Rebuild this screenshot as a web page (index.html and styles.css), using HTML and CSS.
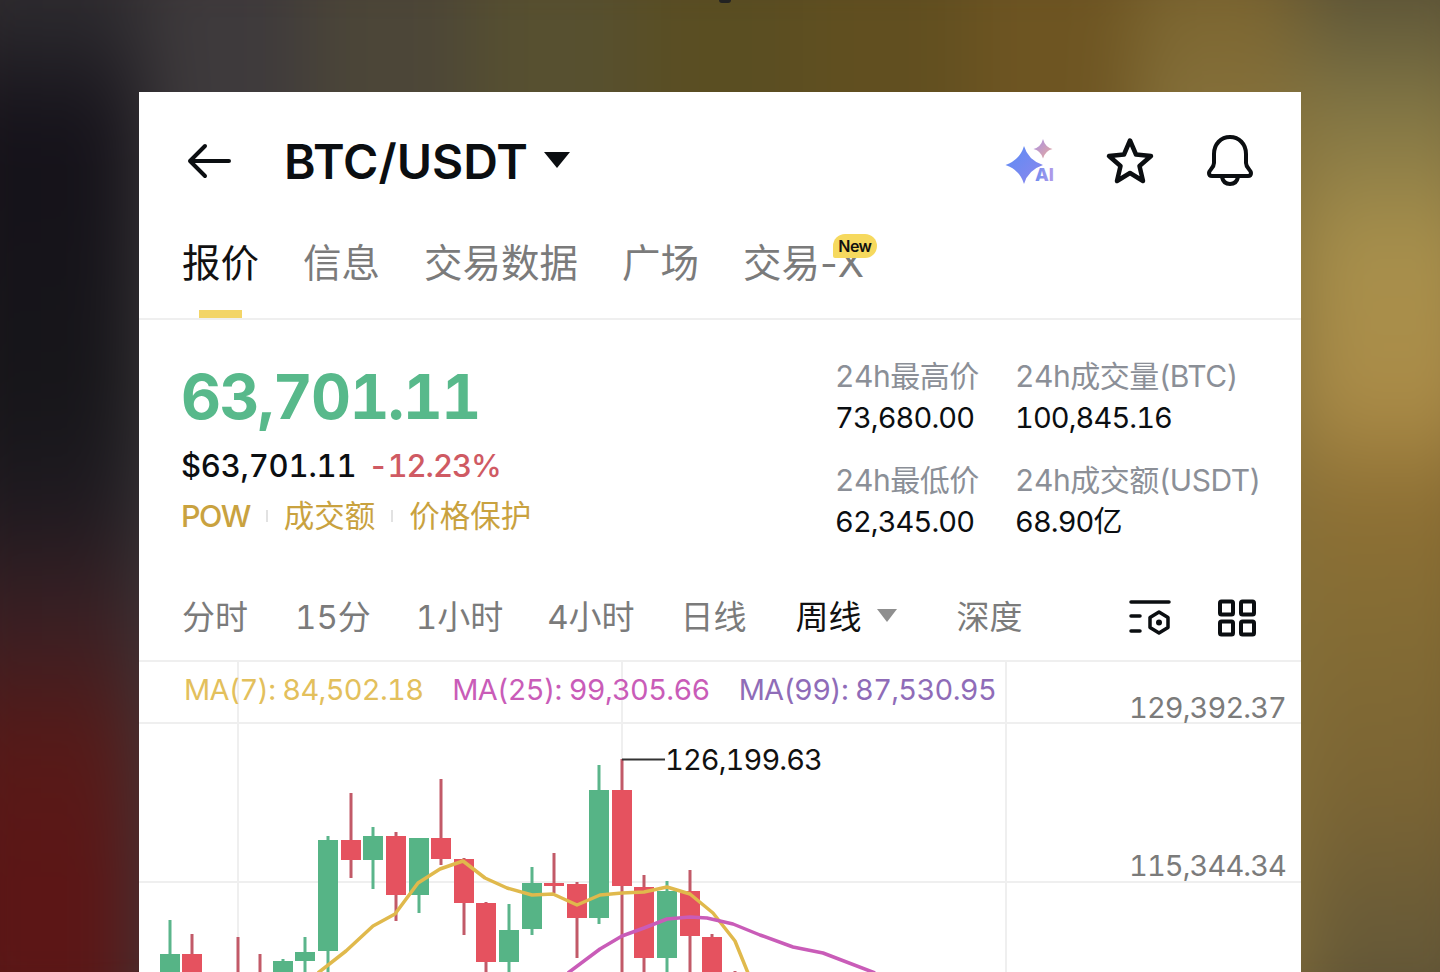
FILE: index.html
```html
<!DOCTYPE html>
<html>

<head>
	<meta charset="utf-8">
	<title>BTC/USDT</title>
	<link rel="stylesheet" href="styles.css">
</head>

<body>
	<div class="backdrop">
		<div class="backdrop-inner">
			<div class="bg-col bg-left"></div>
			<div class="bg-col bg-m1"></div>
			<div class="bg-col bg-m2"></div>
			<div class="bg-col bg-m3"></div>
			<div class="bg-col bg-m4"></div>
			<div class="bg-col bg-m5"></div>
			<div class="bg-col bg-m6"></div>
			<div class="bg-col bg-m7"></div>
			<div class="bg-col bg-right"></div>
		</div>
	</div>
	<div class="notch"></div>
	<div class="card">
		<div class="topbar">
			<svg class="back" width="46" height="38" viewBox="0 0 46 38"><path d="M42 19H3M18 4 3 19l15 15" fill="none" stroke="#0b0e11" stroke-width="4" stroke-linecap="round" stroke-linejoin="round"/></svg>
			<span class="pair">BTC/USDT</span>
			<span class="pair-caret"></span>
			<div class="topicons">
				<svg width="52" height="50" viewBox="0 0 52 50">
					<defs>
						<linearGradient id="aigrad" x1="0" y1="0" x2="1" y2="1"><stop offset="0" stop-color="#5b8cf5"/><stop offset="1" stop-color="#8d86ec"/></linearGradient>
						<linearGradient id="aigrad2" x1="0" y1="0" x2="1" y2="1"><stop offset="0" stop-color="#a78fe6"/><stop offset="1" stop-color="#e8ab9c"/></linearGradient>
						<linearGradient id="aigrad3" x1="0" y1="0" x2="1" y2="0"><stop offset="0" stop-color="#6f8cf0"/><stop offset="1" stop-color="#b49be8"/></linearGradient>
					</defs>
					<path d="M21 10Q25 24 40 29 25 34 21 48 17 34 2.500 29 17 24 21 10Z" fill="url(#aigrad)"/>
					<path d="M40 3Q42 11 49.500 13 42 15 40 22.500 38 15 30.500 13 38 11 40 3Z" fill="url(#aigrad2)"/>
					<text x="32" y="45" class="ai-text" fill="url(#aigrad3)">AI</text>
				</svg>
				<svg width="50" height="48" viewBox="0 0 50 48"><path d="M25 3.500 31 17.500 46 19 34.500 29 38 44 25 36 12 44 15.500 29 4 19 19 17.500Z" fill="none" stroke="#0b0e11" stroke-width="4.500" stroke-linejoin="round"/></svg>
				<svg width="50" height="52" viewBox="0 0 50 52"><path d="M4 38C4 35 9 33 9 28V19C9 9 16 2 25 2S41 9 41 19V28C41 33 46 35 46 38 46 40 45 41 43 41H7C5 41 4 40 4 38ZM17 42C18 47 21 49 25 49S32 47 33 42" fill="none" stroke="#0b0e11" stroke-width="4" stroke-linejoin="round"/></svg>
			</div>
		</div>

		<div class="tabs">
			<div class="tab tab-active">报价</div>
			<div class="tab">信息</div>
			<div class="tab">交易数据</div>
			<div class="tab">广场</div>
			<div class="tab tab-new">交易-X<span class="new-badge">New</span></div>
		</div>

		<div class="stats">
			<div class="price-block">
				<div class="price">63,701.11</div>
				<div class="subprice"><span class="usd">$63,701.11</span><span class="change">-12.23%</span></div>
				<div class="tags">
					<span class="tag-pow">POW</span><i class="tag-sep"></i><span>成交额</span><i class="tag-sep"></i><span>价格保护</span>
				</div>
			</div>
			<div class="figures">
				<div class="figure"><div class="figure-label">24h最高价</div><div class="figure-value">73,680.00</div></div>
				<div class="figure"><div class="figure-label">24h成交量(BTC)</div><div class="figure-value">100,845.16</div></div>
				<div class="figure"><div class="figure-label">24h最低价</div><div class="figure-value">62,345.00</div></div>
				<div class="figure"><div class="figure-label">24h成交额(USDT)</div><div class="figure-value">68.90亿</div></div>
			</div>
		</div>

		<div class="ranges">
			<span class="range range-a">分时</span>
			<span class="range range-b">15分</span>
			<span class="range range-c">1小时</span>
			<span class="range range-d">4小时</span>
			<span class="range range-e">日线</span>
			<span class="range range-f">周线</span>
			<span class="range-caret"></span>
			<span class="range range-g">深度</span>
			<div class="range-icons">
				<svg width="42" height="38" viewBox="0 0 42 38" fill="none" stroke="#0b0e11" stroke-width="3.500" stroke-linecap="round">
					<path d="M2 3H40M2 17H11M2 32H11"/>
					<path d="M30 13 39 18.500V28.500L30 34 21 28.500V18.500Z" stroke-linejoin="round"/>
					<circle cx="30" cy="23.500" r="3" fill="#0b0e11" stroke="none"/>
				</svg>
				<svg width="40" height="38" viewBox="0 0 40 38" fill="none" stroke="#0b0e11" stroke-width="4">
					<rect x="3" y="2.500" width="13" height="13" rx="1.500"/>
					<rect x="24" y="2.500" width="13" height="13" rx="1.500"/>
					<rect x="3" y="22.500" width="13" height="13" rx="1.500"/>
					<rect x="24" y="22.500" width="13" height="13" rx="1.500"/>
				</svg>
			</div>
		</div>

		<div class="chart">
			<svg class="plot" width="1162" height="311" viewBox="139 661 1162 311">
				<g stroke="#efefef" stroke-width="2">
					<path d="M238 661V972M622 661V972M1006 661V972"/>
					<path d="M139 722H1301M139 881H1301"/>
				</g>
				<g id="candles"></g>
				<polyline class="ma ma7" points="318,972 346,950 373,925 395,913 418,882 440,868 463,860 485,877 507,887 532,894 553,893 577,904 600,894 622,892 644,891 667,886 690,893 713,912 735,940 748,972"/>
				<polyline class="ma ma25" points="568,972 600,948 622,935 644,927 667,918 690,916 707,917 733,923 760,934 793,946 823,952 875,972"/>
				<path d="M622 758.500H665" stroke="#333" stroke-width="2" fill="none"/>
				<text x="665" y="769" class="peak">126,199.63</text>
				<text x="1129" y="717" class="axis">129,392.37</text>
				<text x="1129" y="875" class="axis">115,344.34</text>
			</svg>
			<div class="ma-row">
				<span class="ma-7">MA(7): 84,502.18</span>
				<span class="ma-25">MA(25): 99,305.66</span>
				<span class="ma-99">MA(99): 87,530.95</span>
			</div>
		</div>
	</div>
	<script src="chart.js"></script>
</body>
</html>
```

FILE: chart.js
```js
// x, wick top, wick bottom, body top, body bottom, green or red
var candles = [
	[170, 919, 972, 953, 972, "g"],
	[192, 933, 972, 953, 972, "r"],
	[238, 936, 972, 972, 972, "r"],
	[260, 953, 972, 972, 972, "r"],
	[283, 958, 972, 960, 972, "g"],
	[305, 936, 972, 951, 960, "g"],
	[328, 835, 972, 839, 950, "g"],
	[351, 792, 877, 839, 859, "r"],
	[373, 826, 888, 835, 859, "g"],
	[396, 831, 920, 835, 894, "r"],
	[419, 837, 912, 837, 894, "g"],
	[441, 778, 864, 837, 858, "r"],
	[464, 857, 934, 858, 902, "r"],
	[486, 901, 972, 902, 961, "r"],
	[509, 903, 972, 929, 961, "g"],
	[532, 866, 934, 882, 928, "g"],
	[554, 852, 892, 882, 885, "r"],
	[577, 881, 957, 883, 917, "r"],
	[599, 764, 923, 789, 917, "g"],
	[622, 758, 972, 789, 885, "r"],
	[644, 874, 972, 886, 957, "r"],
	[667, 880, 972, 890, 957, "g"],
	[690, 869, 972, 890, 935, "r"],
	[712, 933, 972, 936, 972, "r"],
	[735, 970, 972, 972, 972, "r"]
];

var colors = { g: ["#56b486", "#5bb58b"], r: ["#e5525f", "#c25a68"] };
var html = "";

for(var i = 0; i < candles.length; ++i) {
	var c = candles[i];
	var col = colors[c[5]];
	html += '<rect x="' + (c[0] - 1.5) + '" y="' + c[1] + '" width="3" height="' + (c[2] - c[1]) + '" fill="' + col[1] + '"/>';
	html += '<rect x="' + (c[0] - 10) + '" y="' + c[3] + '" width="20" height="' + (c[4] - c[3]) + '" fill="' + col[0] + '"/>';
}

document.getElementById("candles").innerHTML = html;
```

FILE: styles.css
```css
html, body {
	margin: 0;
	height: 972px;
	overflow: hidden;
}

body {
	padding-top: 92px;
	box-sizing: border-box;
	font-family: "Inter", "Noto Sans CJK SC", sans-serif;
	font-variant-numeric: tabular-nums;
	color: #0b0e11;
	background-color: #3a2a20;
}

/* blurred wallpaper behind the card */
.backdrop {
	position: absolute;
	left: 0;
	right: 0;
	top: 0;
	height: 972px;
	overflow: hidden;
}

.backdrop-inner {
	position: absolute;
	left: -60px;
	right: -60px;
	top: -60px;
	bottom: -60px;
	display: flex;
	filter: blur(36px);
}

.bg-col { flex: 1; }

.bg-left {
	flex: 0 0 200px;
	background: linear-gradient(180deg, #2e2c30 60px, #15121a 190px, #17161a 460px, #1e1a20 560px, #3a2024 680px, #571a18 805px, #5c1616 930px);
}

.bg-right {
	flex: 0 0 200px;
	background: linear-gradient(180deg, #5e5638 60px, #7f7444 160px, #a8904c 310px, #ab8c48 460px, #8e7034 560px, #846c34 680px, #7a6434 860px, #645838 1032px);
}

.bg-m1 { background: #3e3a3c; }
.bg-m2 { background: #4c4638; }
.bg-m3 { background: #575030; }
.bg-m4 { background: #5a4e22; }
.bg-m5 { background: #614f20; }
.bg-m6 { background: #6e5522; }
.bg-m7 { background: linear-gradient(180deg, #7b6530 60px, #85703a 160px); }

.notch {
	position: absolute;
	left: 719px;
	top: 0;
	width: 12px;
	height: 3px;
	background: #222;
	border-radius: 0 0 6px 6px;
}

.card {
	position: relative;
	width: 1162px;
	height: 880px;
	margin: 0 auto;
	background: #ffffff;
	overflow: hidden;
}

/* top bar */
.topbar {
	display: flex;
	align-items: center;
	height: 138px;
	padding: 0 46px 0 48px;
}

.back {
	margin-right: 51px;
}

.pair {
	font-size: 48px;
	font-weight: 600;
}

.pair-caret {
	margin: 0 0 2px 16px;
	border-left: 13px solid transparent;
	border-right: 13px solid transparent;
	border-top: 16px solid #0b0e11;
}

.topicons {
	display: flex;
	align-items: center;
	gap: 50px;
	margin-left: auto;
}

.ai-text {
	font-size: 18px;
	font-weight: 800;
}

/* tabs */
.tabs {
	display: flex;
	gap: 44px;
	height: 90px;
	padding-left: 43px;
	border-bottom: 2px solid #efefef;
	box-sizing: border-box;
}

.tab {
	position: relative;
	font-size: 38.500px;
	line-height: 66px;
	color: #7b7b7b;
}

.tab-active {
	color: #111111;
}

.tab-active::after {
	content: "";
	position: absolute;
	left: 17px;
	right: 17px;
	bottom: 0;
	height: 8px;
	background: #f3d567;
}

.tab-new {
	font-variant-numeric: normal;
}

.new-badge {
	position: absolute;
	right: -13px;
	top: 4px;
	padding: 0 5.500px;
	font-size: 16px;
	font-weight: 600;
	line-height: 24px;
	letter-spacing: -0.5px;
	color: #111111;
	background: #f6d95e;
	border-radius: 12px 12px 12px 2px;
}

/* price and 24h figures */
.stats {
	display: flex;
	justify-content: space-between;
	height: 260px;
	padding: 36px 44px 0 42px;
	box-sizing: border-box;
}

.price-block {
	padding-top: 4px;
}

.price {
	font-size: 62px;
	font-weight: 700;
	line-height: 74px;
	letter-spacing: -1.700px;
	color: #58b98b;
}

.subprice {
	display: flex;
	gap: 12px;
	margin-top: 12px;
	font-size: 31px;
	line-height: 40px;
	font-weight: 500;
}

.usd {
	letter-spacing: -0.200px;
}

.change {
	letter-spacing: -1px;
	color: #cf5a63;
}

.tags {
	display: flex;
	align-items: center;
	gap: 16px;
	margin-top: 10px;
	font-size: 30.500px;
	line-height: 40px;
	color: #c9a23f;
}

.tag-pow {
	font-weight: 500;
	letter-spacing: -1.500px;
}

.tag-sep {
	width: 2px;
	height: 12px;
	background: #e2e2e2;
}

.figures {
	display: grid;
	grid-template-columns: 180px 242px;
	row-gap: 22px;
	align-content: start;
}

.figure-label {
	font-size: 30px;
	line-height: 40px;
	letter-spacing: -0.500px;
	white-space: nowrap;
	color: #8b8f97;
}

.figure-value {
	margin-top: 2px;
	font-size: 29px;
	line-height: 40px;
	letter-spacing: -0.900px;
}

/* time ranges */
.ranges {
	display: flex;
	align-items: center;
	height: 82px;
	padding: 0 44px 10px 43px;
	border-bottom: 2px solid #efefef;
	box-sizing: border-box;
	font-size: 33px;
	color: #7b7b7b;
}

.range-a { margin-right: 47px; }
.range-b { margin-right: 45px; }
.range-c { margin-right: 44px; }
.range-d { margin-right: 46px; }
.range-e { margin-right: 49px; }

.range-f {
	color: #111111;
	margin-right: 15px;
}

.range-caret {
	margin: 0 60px 0 0;
	border-left: 10px solid transparent;
	border-right: 10px solid transparent;
	border-top: 13px solid #8f8f8f;
}

.range-icons {
	display: flex;
	align-items: center;
	gap: 46px;
	margin-top: 6px;
	margin-left: auto;
}

/* chart */
.chart {
	position: relative;
	height: 311px;
}

.plot {
	position: absolute;
	left: 0;
	top: 0;
}

.ma {
	fill: none;
	stroke-width: 3.500;
	stroke-linejoin: round;
}

.ma7 { stroke: #e0b94c; }
.ma25 { stroke: #c95cb8; }

.peak {
	font-size: 29px;
	letter-spacing: -0.900px;
	fill: #111111;
}

.axis {
	font-size: 29px;
	letter-spacing: -0.900px;
	fill: #7b7b7b;
}

.ma-row {
	position: relative;
	display: flex;
	gap: 29px;
	padding-left: 45px;
	font-size: 29px;
	line-height: 56px;
	letter-spacing: -0.700px;
}

.ma-7 { color: #e3c05c; }
.ma-25 { color: #c95cb8; }
.ma-99 { color: #8f6cb8; }
```
